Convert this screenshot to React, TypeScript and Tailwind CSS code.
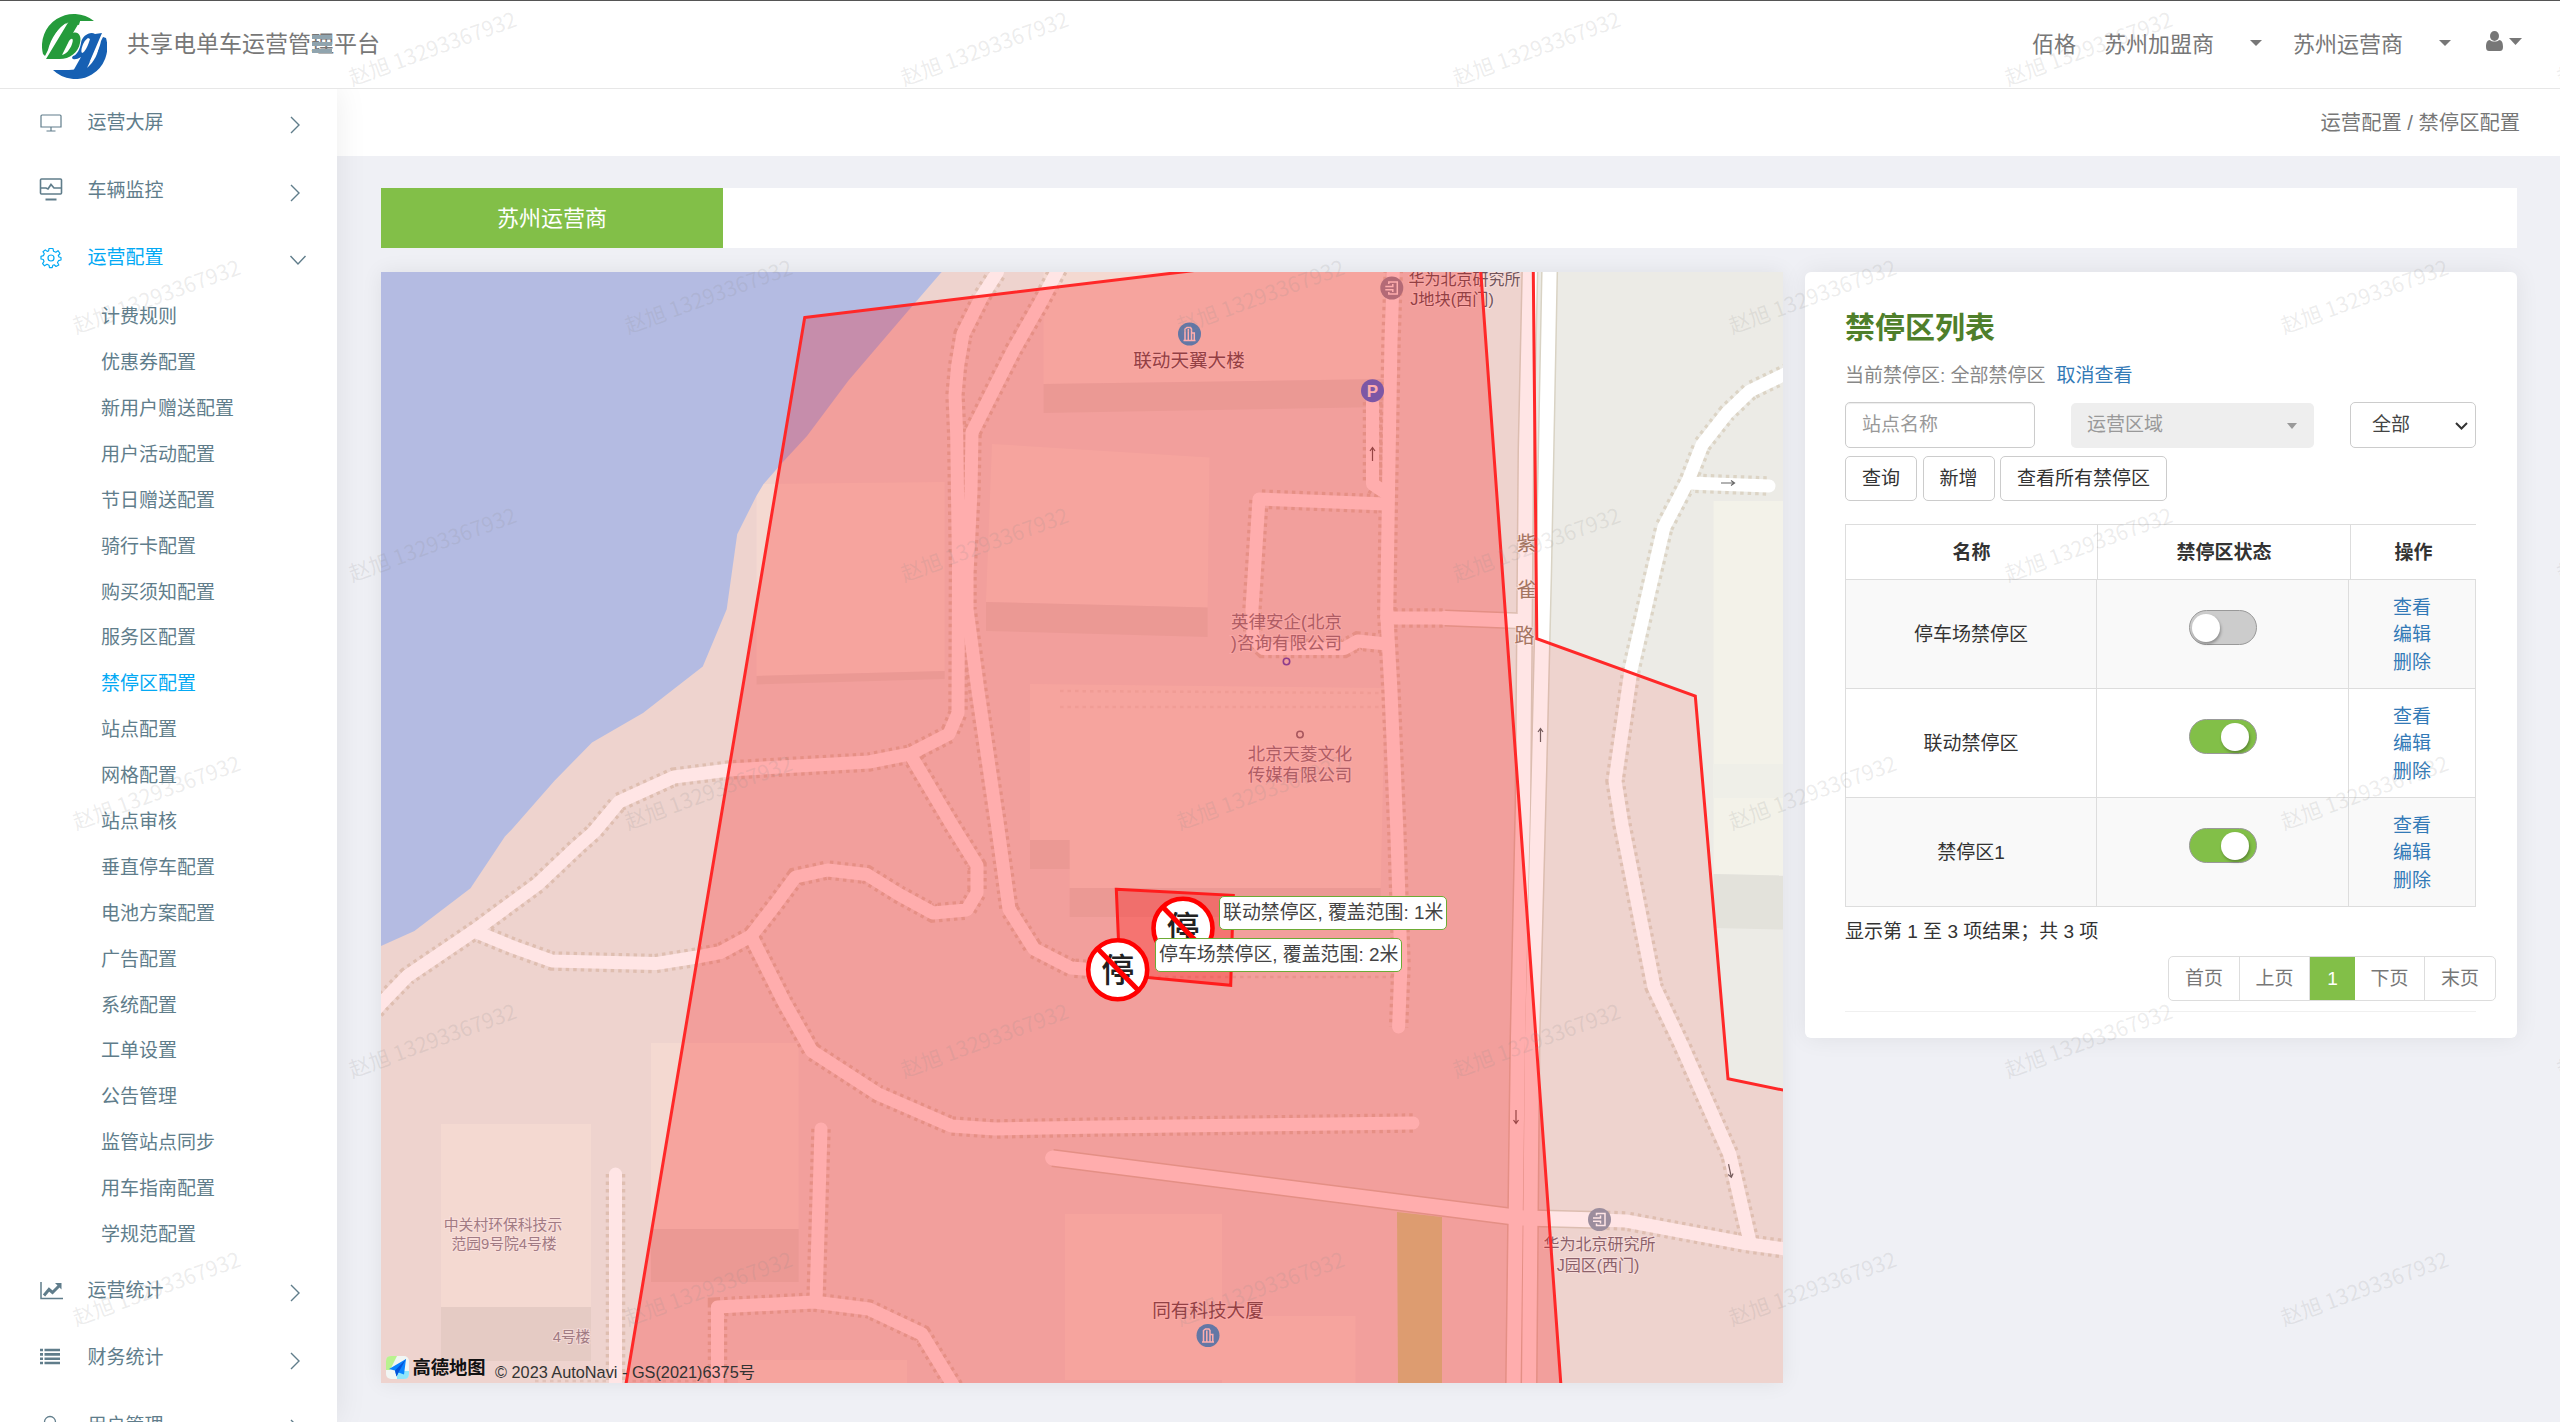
import React from "react";

const SUB_ITEMS = [
  "计费规则", "优惠券配置", "新用户赠送配置", "用户活动配置", "节日赠送配置", "骑行卡配置", "购买须知配置",
  "服务区配置", "禁停区配置", "站点配置", "网格配置", "站点审核", "垂直停车配置", "电池方案配置", "广告配置",
  "系统配置", "工单设置", "公告管理", "监管站点同步", "用车指南配置", "学规范配置",
];

const ZONES = [
  { name: "停车场禁停区", on: false },
  { name: "联动禁停区", on: true },
  { name: "禁停区1", on: true },
];

function Logo() {
  return (
    <svg className="h-[66px] w-[65px] shrink-0" viewBox="0 0 65 66">
      <path d="M1 41A32 32 0 0 1 52 8L38 8L37 12L27 9C16 14 9 25 6 37L3 43Z" fill="#259b3b" />
      <path d="M27 8L38 8L31 20C36 18 40 23 38 30C36 40 27 47 15 46H4Z" fill="#259b3b" />
      <path d="M24 10L11 33C10 25 15 16 24 10Z" fill="#fff" />
      <path d="M27 28C30 24 32 26 30 31C28 37 24 41 20 42Z" fill="#fff" />
      <path d="M64 25A32 32 0 0 1 11 57L27 57C44 57 56 44 59 28L61 24Z" fill="#1660b3" />
      <path d="M60 20L42 62L30 60L39 44C33 48 28 46 31 43C35 42 38 36 39 30C40 23 48 18 53 21Z" fill="#1660b3" />
      <path d="M46 25C41 28 38 38 40 40C43 39 46 33 48 26Z" fill="#fff" />
      <path d="M57 30L45 55C52 49 57 40 57 30Z" fill="#fff" />
    </svg>
  );
}

function Caret({ className }: { className: string }) {
  return (
    <svg className={className} viewBox="0 0 12 6" preserveAspectRatio="none">
      <path d="M0 0H12L6 6Z" fill="currentColor" />
    </svg>
  );
}

function NavIcon({ kind }: { kind: string }) {
  const line = { fill: "none", stroke: "currentColor" } as const;
  return (
    <svg className="h-[24px] w-[24px]" viewBox="0 0 24 24">
      {kind === "screen" && (
        <g {...line} strokeWidth="1.2">
          <path d="M3 4H21Q22 4 22 5V16H2V5Q2 4 3 4ZM12 16V20M7.500 20H16.500" />
        </g>
      )}
      {kind === "monitor" && (
        <g {...line} strokeWidth="2">
          <rect x="1.500" y="1" width="21" height="15" rx="1" strokeWidth="1.600" />
          <path d="M2 10H7L9 11L12 6.500L15 10H22" strokeWidth="1.700" />
          <path d="M6.500 21.500H17.500" />
        </g>
      )}
      {kind === "gear" && (
        <g {...line} strokeWidth="1.200" strokeLinejoin="round">
          <circle cx="12" cy="12" r="3" />
          <path d="M10 2.500H14L14.500 5.200L16.800 6.200L19 4.700L21 7.500L19.300 9.500L20 11L22 11.500V14L19.500 14.700L18.500 16.500L19.800 19L17 20.500L15.200 18.800L13.800 19.300L13.200 21.700H10.500L10 19.200L8 18.300L5.500 19.800L3.600 17.600L5 15.400L4.300 13.500L2 13V10.300L4.400 9.700L5.300 7.800L4 5.700L6.300 3.900L8.200 5.400L9.600 4.900Z" />
        </g>
      )}
      {kind === "chart" && (
        <g {...line}>
          <path d="M2 3V19.500H24" strokeWidth="1.500" />
          <path d="M5 16.500L10 10.500L13.500 13.500L20 7" strokeWidth="3" />
          <path d="M16 4H22.500V10.500Z" fill="currentColor" stroke="none" />
        </g>
      )}
      {kind === "list" && (
        <g {...line} strokeWidth="2.600">
          <path d="M1 4H4M1 8.400H4M1 12.800H4M1 17H4M5.500 4H21M5.500 8.400H21M5.500 12.800H21M5.500 17H21" />
        </g>
      )}
      {kind === "user" && (
        <g {...line} strokeWidth="1.300">
          <circle cx="11" cy="8" r="5.500" />
          <path d="M2 23C2 17 6 14.500 11 14.500C16 14.500 20 17 20 23" />
        </g>
      )}
    </svg>
  );
}

function NavRow({ icon, label, open = false }: { icon: string; label: string; open?: boolean }) {
  return (
    <div className={`flex h-[67.500px] shrink-0 items-center pl-[39px] ${open ? "text-[#03a9f4]" : "text-[#607d8b]"}`}>
      <NavIcon kind={icon} />
      <span className="ml-[24.500px] w-[201px] pt-px">{label}</span>
      <svg className="mt-[5px] h-[18px] w-[18px] text-[#607d8b]" viewBox="0 0 18 18" fill="none" stroke="currentColor" strokeWidth="1.400">
        {open ? <path d="M1.500 5L9 13L16.500 5" /> : <path d="M2 1L10 9L2 17" />}
      </svg>
    </div>
  );
}

function Sidebar() {
  return (
    <aside className="z-10 flex w-[337px] shrink-0 flex-col overflow-hidden bg-white text-[19px] shadow-[0_0_30px_rgba(0,0,0,0.080)]">
      <NavRow icon="screen" label="运营大屏" />
      <NavRow icon="monitor" label="车辆监控" />
      <NavRow icon="gear" label="运营配置" open />
      <ul className="h-[965.400px] shrink-0 pt-[3px] pl-[101px]">
        {SUB_ITEMS.map((t) => (
          <li key={t} className={`flex h-[45.900px] items-center ${t === "禁停区配置" ? "text-[#03a9f4]" : "text-[#607d8b]"}`}>
            {t}
          </li>
        ))}
      </ul>
      <NavRow icon="chart" label="运营统计" />
      <NavRow icon="list" label="财务统计" />
      <NavRow icon="user" label="用户管理" />
    </aside>
  );
}

function Header() {
  return (
    <header className="relative z-20 flex h-[89px] shrink-0 items-center border-t border-b border-t-[#555] border-b-[#e7e7e7] bg-white pr-[38px] pl-[42px] text-[22px] text-[#777]">
      <div className="flex items-center">
        <div className="pt-[2px]"><Logo /></div>
        <div className="relative ml-[20px] text-[23px]">
          共享电单车运营管理平台
          <div className="absolute top-[8px] left-[185px] flex flex-col gap-[3px]">
            <div className="h-[4px] w-[20px] bg-[#90a4ae]" />
            <div className="h-[4px] w-[20px] bg-[#90a4ae]" />
            <div className="h-[4px] w-[20px] bg-[#90a4ae]" />
          </div>
        </div>
      </div>
      <div className="ml-auto flex items-center">
        <span className="mr-[28px]">佰格</span>
        <span>苏州加盟商</span>
        <Caret className="mr-[31px] mb-[3px] ml-[36px] h-[6px] w-[12px]" />
        <span>苏州运营商</span>
        <Caret className="mr-[35px] mb-[3px] ml-[36px] h-[6px] w-[12px]" />
        <svg className="mb-[7px] h-[20px] w-[17px]" viewBox="0 0 17 20">
          <ellipse cx="8.500" cy="5" rx="4.500" ry="5" fill="currentColor" />
          <path d="M4 9C1 9 0 12 0 16C0 19 1.500 20 3 20H14C15.500 20 17 19 17 16C17 12 16 9 13 9C11.500 11 5.500 11 4 9Z" fill="currentColor" />
        </svg>
        <Caret className="mb-[6px] ml-[6px] h-[7px] w-[13px]" />
      </div>
    </header>
  );
}

const DOTTED = [
  "M997.500 266V272L981.500 297L963 334L957.600 366L955 395L956.700 434L958.500 566L958 713L949 734L910 754L869 762L729 770L674 777L619 802L594 832L577 847L538 884L474 931L407.500 976L381 1003.600L365 1022",
  "M1062 262L1041 302L1013.600 350L972 432.500L971 491L967 573.600V609L978 691L997.500 825L1009 909L1034 949L1071 968L1110 971",
  "M910 754L952 825L977 865.400V892.700L966.800 910L933 913L899 894.500L866.700 874.500L827.600 870L795.500 877L775 905L751 936",
  "M474 931L513 947L552 961L655.500 963.600L697 957L720 952.700L751 936L784 1002L811.600 1051L878 1094L951.600 1126L995 1129L1100 1127L1413 1123",
  "M821 1129L816 1301.600",
  "M717.500 1390V1307L814 1302L869 1309L922 1334L956 1390",
  "M615.500 1174V1390",
  "M1393.600 262L1391 341L1388.500 491L1386.700 613L1391 691L1396.800 830L1401 965L1398.600 1027",
  "M1372.500 402V484L1386 493",
  "M1385 504L1259 499L1252 609L1253 638L1263.600 648.600H1344L1357.800 641L1386.700 644",
  "M1386.700 618H1445",
  "M1810 362L1783 375L1750 391L1727 413L1702 445L1688 481L1664 527L1649 591L1631 670L1615 781L1622 825L1654 987L1681.500 1045L1729.700 1154L1750 1242",
  "M1688 483L1769 486",
  "M1599 1220L1626 1221L1746 1243.500L1800 1251",
];

const BUILDINGS = [
  "M756.500 484L944.700 482V671L756.500 676Z",
  "M1043.500 262H1385V379L1043.500 384Z",
  "M992 444L1209.500 457.500L1207.600 607.500L986 602Z",
  "M1030 684L1385 688L1380.700 888H1069.600V840H1030Z",
  "M651 1043H798.700V1229H651Z",
  "M441 1124H591V1307H441Z",
  "M1065 1214H1222V1380H1065Z",
  "M1222 1316H1355.500V1390H1222Z",
  "M738 1360H907V1390H738Z",
  "M1713.600 501H1800V876L1713.600 874Z",
];

const SHADES = [
  "M756.500 676L944.700 671V679L756.500 684.500Z",
  "M1043.500 384L1385 379V407L1043.500 413Z",
  "M986 602L1207.600 607.500V637L986 631Z",
  "M1030 840H1069.600V869H1030Z",
  "M1069.600 888H1380.700V917H1069.600Z",
  "M651 1229H798.700V1282H651Z",
  "M441 1307H591V1361H441Z",
  "M1713.600 874L1800 876V930L1713.600 928Z",
];

function DoorPin({ x, y }: { x: number; y: number }) {
  return (
    <g transform={`translate(${x} ${y})`}>
      <circle r="11.500" fill="#919eaf" />
      <path d="M-3 -4V-6H5.500V6H-3V4M-6.500 -1.500H1V-4M-6.500 1.800H1V4" fill="none" stroke="#fff" strokeWidth="1.500" />
    </g>
  );
}

function TowerPin({ x, y }: { x: number; y: number }) {
  return (
    <g transform={`translate(${x} ${y})`}>
      <circle r="11.500" fill="#1bb0f4" />
      <path d="M-6 6.500H6M-4.500 6V-5L-2.500 -6.500H1L2 -5V6M-1.200 6V-5M4.800 6V-1H2" fill="none" stroke="#fff" strokeWidth="1.500" />
    </g>
  );
}

function Arrow({ x, y, r }: { x: number; y: number; r: number }) {
  return (
    <path
      transform={`translate(${x} ${y}) rotate(${r})`}
      d="M0 7V-6.500M-2.500 -3L0 -6.500L2.500 -3"
      fill="none"
      stroke="#666"
      strokeWidth="1.200"
    />
  );
}

function Label({ x, y, size, color, children }: { x: number; y: number; size: number; color: string; children: string }) {
  return (
    <text x={x} y={y + size * 0.35} fontSize={size} fill={color} stroke="#fff" strokeWidth="2" strokeOpacity="0.550" paintOrder="stroke" textAnchor="middle">
      {children}
    </text>
  );
}

function NoStop({ x, y }: { x: number; y: number }) {
  return (
    <g transform={`translate(${x} ${y})`}>
      <circle r="29.500" fill="#fff" stroke="#f00" strokeWidth="4.600" />
      <text y="12" fontSize="33" fontWeight="500" fill="#222" textAnchor="middle">停</text>
      <path d="M-20 -21L21 21" stroke="#f00" strokeWidth="5" />
    </g>
  );
}

function MapTip({ text }: { text: string }) {
  return (
    <div className="flex h-[34px] items-center rounded-[5px] border border-[#6cab35] bg-white px-[3px] text-[18.900px] whitespace-pre text-[#444]">
      {text}
    </div>
  );
}

function MapView() {
  return (
    <div className="relative h-[1111px] w-[1402px] shrink-0 overflow-hidden shadow-[0_0_20px_rgba(0,0,0,0.070)]">
      <svg className="block h-full w-full" viewBox="381 272 1402 1111">
        <rect x="381" y="272" width="1403" height="1111" fill="#ecebe6" />
        <g fill="#f3f2e9">{BUILDINGS.map((d) => <path key={d} d={d} />)}</g>
        <g fill="#e3e2db">{SHADES.map((d) => <path key={d} d={d} />)}</g>
        <path d="M1713.600 764H1800V798H1713.600Z" fill="#efefe8" />
        <path d="M942.500 271L908 311L848.300 380.700L807 436L782 463L763.400 484.300L756.500 495.700L737.200 534.300L726.700 609.300L702.800 666.400L643 713L592 742.500L554.500 780.700L511.300 830L504.900 836.400L470.500 888.300L414.400 931L381 946V271Z" fill="#acd1fc" />
        <path d="M1397 1212L1442 1217V1383H1398Z" fill="#cee7a6" />
        <g fill="none" stroke="#dcd5c8" strokeDasharray="3.500 4" strokeWidth="2.500">
          <path d="M1060 691L1385 693M1060 707H1385" strokeOpacity="0.400" />
          <path d="M1150 977H1393M535 1381H717" strokeOpacity="0.800" />
        </g>
        <g fill="none" stroke="#dcd4c5" strokeWidth="19.500" strokeDasharray="3.500 4">
          {DOTTED.map((d) => <path key={d} d={d} />)}
        </g>
        <g fill="none" stroke="#d9d3c4">
          <path d="M1530 266L1526 450L1523 806L1518 1038L1513.500 1390" strokeWidth="17" />
          <path d="M1549.700 266L1543.700 574L1539 770L1532 1038L1529 1390" strokeWidth="17" />
          <path d="M1445 618L1516 620.700" strokeWidth="17" />
          <path d="M1052.600 1158L1507 1216L1523 1218L1599 1220" strokeWidth="18" />
        </g>
        <g fill="none" stroke="#fff" strokeWidth="13" strokeLinecap="round" strokeLinejoin="round">
          {DOTTED.map((d) => <path key={d} d={d} />)}
          <path d="M1530 266L1526 450L1523 806L1518 1038L1513.500 1390" strokeWidth="14" />
          <path d="M1549.700 266L1543.700 574L1539 770L1532 1038L1529 1390" strokeWidth="14" />
          <path d="M1445 618L1516 620.700" strokeWidth="14" />
          <path d="M1052.600 1158L1507 1216L1523 1218L1599 1220" strokeWidth="15" />
        </g>
        <Arrow x={1372.5} y={454} r={0} />
        <Arrow x={1540.5} y={735} r={0} />
        <Arrow x={1728} y={483} r={90} />
        <Arrow x={1516} y={1117} r={180} />
        <Arrow x={1730} y={1171} r={168} />
        <Label x={1189} y={360} size={18.600} color="#605f66">联动天翼大楼</Label>
        <Label x={1464.500} y={279.500} size={16} color="#605f66">华为北京研究所</Label>
        <Label x={1452} y={299.500} size={16.200} color="#605f66">J地块(西门)</Label>
        <Label x={1286.500} y={621.500} size={17.500} color="#8a8a94">英律安企(北京</Label>
        <Label x={1286.500} y={642.500} size={17.500} color="#8a8a94">)咨询有限公司</Label>
        <Label x={1300} y={753.500} size={17.400} color="#8a8a94">北京天菱文化</Label>
        <Label x={1300} y={775} size={17.400} color="#8a8a94">传媒有限公司</Label>
        <Label x={1526.500} y={544} size={20} color="#9a836c">紫</Label>
        <Label x={1526.500} y={590} size={20} color="#9a836c">雀</Label>
        <Label x={1524.500} y={636} size={20} color="#9a836c">路</Label>
        <Label x={503} y={1225} size={14.800} color="#968992">中关村环保科技示</Label>
        <Label x={504} y={1244} size={14.800} color="#968992">范园9号院4号楼</Label>
        <Label x={571.500} y={1336.500} size={14.700} color="#968992">4号楼</Label>
        <Label x={1599.500} y={1244.500} size={16} color="#7e6d76">华为北京研究所</Label>
        <Label x={1598} y={1265} size={16} color="#7e6d76">J园区(西门)</Label>
        <Label x={1208} y={1310.500} size={18.600} color="#605f66">同有科技大厦</Label>
        <circle cx="1286.500" cy="661.500" r="3.200" fill="none" stroke="#5a5ad0" strokeWidth="1.600" />
        <circle cx="1300" cy="734.500" r="3.200" fill="none" stroke="#82828c" strokeWidth="1.600" />
        <TowerPin x={1189.5} y={334} />
        <TowerPin x={1208} y={1335.5} />
        <DoorPin x={1391.8} y={288} />
        <DoorPin x={1599.5} y={1219.5} />
        <g transform="translate(1372.500 390.700)">
          <circle r="11.500" fill="#4181f4" />
          <text y="6" fontSize="17" fontWeight="700" fill="#fff" textAnchor="middle">P</text>
        </g>
        <g stroke="#ff2828" strokeWidth="3">
          <path d="M370 262H1533.200L1536.800 638.600L1695.300 696L1728 1078.800L1800 1093.500V1400H370Z" fill="#f00" fillOpacity="0.100" />
          <path d="M804.700 317.500L1182 272L1478 236L1480.800 272L1562 1400H623.300Z" fill="#f00" fillOpacity="0.245" />
          <path d="M1116.300 889.300L1233.300 895.300L1230.700 985.300L1120 975Z" fill="#f00" fillOpacity="0.270" stroke="#ff1c1c" />
        </g>
        <NoStop x={1183} y={928.3} />
        <NoStop x={1117.7} y={969.7} />
        <g transform="translate(386 1356)">
          <rect width="23" height="23" rx="5" fill="#f1f6f4" />
          <path d="M5 0H11L4 14H0V5Q0 0 5 0Z" fill="#b9f28f" />
          <path d="M11 15L23 15V18Q23 23 18 23H11Z" fill="#8fe6fb" />
          <path d="M20 3L3 13L9 14.500L10.500 20.500L12.500 16.500L18 18.500Z" fill="#0a84ff" />
          <path d="M20 3L9 14.500L10.500 20.500L12.500 16.500Z" fill="#0453d8" />
        </g>
        <text x="412.500" y="1374" fontSize="18.300" fontWeight="700" fill="#111">高德地图</text>
        <text x="495" y="1378" fontSize="16.300" fill="#333">© 2023 AutoNavi - GS(2021)6375号</text>
      </svg>
      <div className="absolute top-[624px] left-[838px]"><MapTip text="联动禁停区, 覆盖范围: 1米" /></div>
      <div className="absolute top-[666px] left-[774px]"><MapTip text="停车场禁停区, 覆盖范围: 2米" /></div>
    </div>
  );
}

function Switch({ on }: { on: boolean }) {
  return (
    <div className={`flex h-[35px] w-[68px] items-center rounded-full border border-[#999] px-[2px] ${on ? "justify-end bg-[#82bf48] pr-[7px]" : "bg-[#ccc]"}`}>
      <div className="h-[28px] w-[28px] rounded-full bg-white shadow-[1px_2px_3px_rgba(0,0,0,0.300)]" />
    </div>
  );
}

function ZonePanel() {
  const btn = "flex h-[45px] items-center rounded-[5px] border border-[#ccc] bg-white px-[16px] pt-px text-[#333]";
  const page = "flex h-full items-center justify-center border-r border-[#ddd] pt-px";
  return (
    <section className="flex h-[766px] w-[712px] shrink-0 flex-col rounded-[6px] bg-white pl-[40px] text-[19px] shadow-[0_0_24px_rgba(0,0,0,0.070)]">
      <h2 className="mt-[33px] flex h-[44px] items-center text-[30px] font-bold text-[#4f7f2b]">禁停区列表</h2>
      <p className="mt-[13px] flex h-[28px] items-center text-[#888]">
        当前禁停区: 全部禁停区<span className="ml-[11px] text-[#337ab7]">取消查看</span>
      </p>
      <div className="mt-[12px] flex h-[46px] items-center">
        <div className="flex h-[46px] w-[190px] items-center rounded-[5px] border border-[#ccc] pl-[16px] text-[#999] shadow-[inset_0_1px_1px_rgba(0,0,0,0.075)]">站点名称</div>
        <div className="ml-[36px] flex h-[45px] w-[243px] items-center justify-between rounded-[5px] bg-[#eee] pt-px pr-[17px] pl-[16px] text-[#999]">
          运营区域
          <Caret className="h-[6px] w-[10px]" />
        </div>
        <div className="ml-[36px] flex h-[46px] w-[126px] items-center justify-between rounded-[5px] border border-[#ccc] pt-px pr-[7px] pl-[21px] text-[#444]">
          全部
          <svg className="h-[8px] w-[13px]" viewBox="0 0 13 8" fill="none" stroke="#333" strokeWidth="2"><path d="M1 1L6.500 6.500L12 1" /></svg>
        </div>
      </div>
      <div className="mt-[8px] flex gap-[5.500px]">
        <div className={btn}>查询</div>
        <div className={btn}>新增</div>
        <div className={btn}>查看所有禁停区</div>
      </div>
      <div className="mt-[23px] w-[631px] border-t border-l border-[#ddd] text-[#333]">
        <div className="grid h-[55px] grid-cols-[252px_253px_1fr] border-b border-[#ddd] text-center font-bold">
          <div className="flex items-center justify-center border-r border-[#ddd] pt-[2px]">名称</div>
          <div className="flex items-center justify-center border-r border-[#ddd] pt-[2px]">禁停区状态</div>
          <div className="flex items-center justify-center pt-[2px]">操作</div>
        </div>
        {ZONES.map((z, i) => (
          <div key={z.name} className={`grid h-[109px] grid-cols-[251px_252px_1fr] border-r border-b border-[#ddd] ${i % 2 ? "bg-white" : "bg-[#f9f9f9]"}`}>
            <div className="flex items-center justify-center border-r border-[#ddd] pt-[2px]">{z.name}</div>
            <div className="flex items-center justify-center border-r border-[#ddd] pb-[13px]"><Switch on={z.on} /></div>
            <div className="flex flex-col items-center justify-center pt-[2px] leading-[27.200px] text-[#337ab7]">
              <span>查看</span>
              <span>编辑</span>
              <span>删除</span>
            </div>
          </div>
        ))}
      </div>
      <p className="mt-[11px] flex h-[28px] items-center text-[#333]">显示第 1 至 3 项结果；共 3 项</p>
      <div className="mt-[10px] ml-[323px] flex h-[45px] w-[328px] overflow-hidden rounded-[5px] border border-[#ddd] text-[#777]">
        <div className={`${page} w-[71px]`}>首页</div>
        <div className={`${page} w-[70px]`}>上页</div>
        <div className="-my-px flex w-[45px] items-center justify-center bg-[#82bf48] pt-px text-white">1</div>
        <div className={`${page} w-[70px]`}>下页</div>
        <div className="flex flex-1 items-center justify-center pt-px">末页</div>
      </div>
      <div className="mt-[10px] w-[631px] border-t border-[#f0f0f0]" />
    </section>
  );
}

const MARKS = [0, 1, 2, 3, 4, 5].flatMap((row) =>
  [0, 1, 2, 3, 4].map((col) => ({ x: (row % 2 ? 155.5 : 431.5) + col * 552, y: 47 + row * 248 })),
);

function Watermark() {
  return (
    <div className="pointer-events-none absolute inset-0 z-30 overflow-hidden">
      {MARKS.map((m) => (
        <span
          key={`${m.x}-${m.y}`}
          className="absolute -translate-x-1/2 -translate-y-1/2 -rotate-20 text-[21.200px] leading-none whitespace-pre text-[rgba(140,140,140,0.160)] font-['Noto_Sans_CJK_SC',sans-serif]"
          style={{ left: m.x, top: m.y }}
        >
          赵旭 13293367932
        </span>
      ))}
    </div>
  );
}

export default function App() {
  return (
    <div className="relative flex h-[1422px] w-[2560px] flex-col overflow-hidden bg-[#eff0f5] font-['Liberation_Sans','Noto_Sans_CJK_SC',sans-serif] font-normal">
      <Header />
      <div className="flex min-h-0 flex-1">
        <Sidebar />
        <main className="flex flex-1 flex-col">
          <div className="flex h-[67px] shrink-0 items-center justify-end bg-white pt-[2px] pr-[40px] text-[20.300px] text-[#777]">运营配置 / 禁停区配置</div>
          <div className="mt-[32px] mr-[43px] ml-[44px] flex h-[60px] shrink-0 bg-white">
            <div className="flex w-[342px] items-center justify-center bg-[#82bf48] text-[22px] text-white">苏州运营商</div>
          </div>
          <div className="mt-[24px] mr-[43px] ml-[44px] flex items-start justify-between">
            <MapView />
            <ZonePanel />
          </div>
        </main>
      </div>
      <Watermark />
    </div>
  );
}
